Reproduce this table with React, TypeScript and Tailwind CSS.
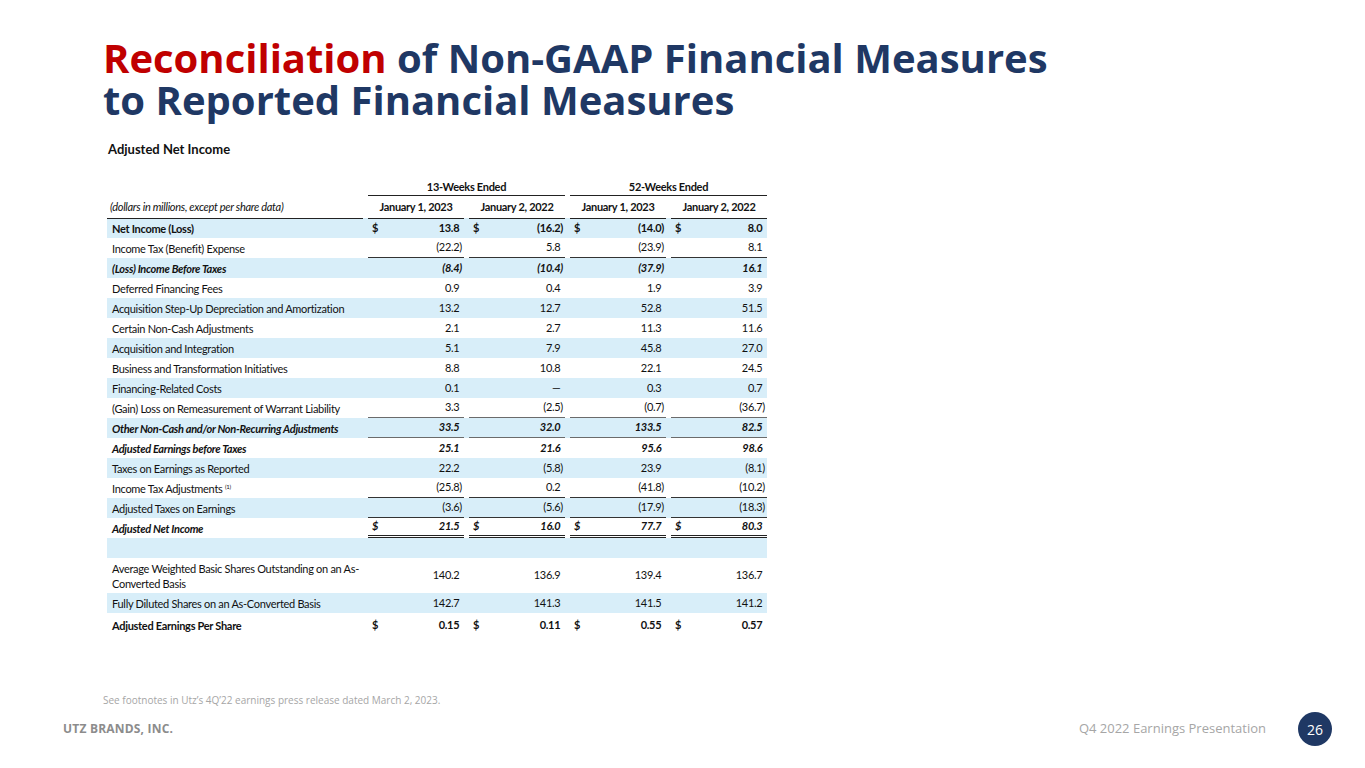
import React from "react";

type Style = "n" | "b" | "bi";
type Row = {
  label: React.ReactNode;
  vals: string[];
  dollar?: boolean;
  style: Style;
  blue?: boolean;
  line?: "single" | "double" | "gray";
  h?: string;
};

const rows: Row[] = [
  { label: "Net Income (Loss)", vals: ["13.8", "(16.2)", "(14.0)", "8.0"], dollar: true, style: "b", blue: true },
  { label: "Income Tax (Benefit) Expense", vals: ["(22.2)", "5.8", "(23.9)", "8.1"], style: "n", line: "single" },
  { label: "(Loss) Income Before Taxes", vals: ["(8.4)", "(10.4)", "(37.9)", "16.1"], style: "bi", blue: true },
  { label: "Deferred Financing Fees", vals: ["0.9", "0.4", "1.9", "3.9"], style: "n" },
  { label: "Acquisition Step-Up Depreciation and Amortization", vals: ["13.2", "12.7", "52.8", "51.5"], style: "n", blue: true },
  { label: "Certain Non-Cash Adjustments", vals: ["2.1", "2.7", "11.3", "11.6"], style: "n" },
  { label: "Acquisition and Integration", vals: ["5.1", "7.9", "45.8", "27.0"], style: "n", blue: true },
  { label: "Business and Transformation Initiatives", vals: ["8.8", "10.8", "22.1", "24.5"], style: "n" },
  { label: "Financing-Related Costs", vals: ["0.1", "—", "0.3", "0.7"], style: "n", blue: true },
  { label: "(Gain) Loss on Remeasurement of Warrant Liability", vals: ["3.3", "(2.5)", "(0.7)", "(36.7)"], style: "n", line: "gray" },
  { label: "Other Non-Cash and/or Non-Recurring Adjustments", vals: ["33.5", "32.0", "133.5", "82.5"], style: "bi", blue: true, line: "gray" },
  { label: "Adjusted Earnings before Taxes", vals: ["25.1", "21.6", "95.6", "98.6"], style: "bi" },
  { label: "Taxes on Earnings as Reported", vals: ["22.2", "(5.8)", "23.9", "(8.1)"], style: "n", blue: true },
  {
    label: (
      <>
        Income Tax Adjustments&nbsp;<sup className="text-[6px] relative -top-[1px]">(1)</sup>
      </>
    ),
    vals: ["(25.8)", "0.2", "(41.8)", "(10.2)"],
    style: "n",
    line: "single",
  },
  { label: "Adjusted Taxes on Earnings", vals: ["(3.6)", "(5.6)", "(17.9)", "(18.3)"], style: "n", blue: true, line: "single" },
  { label: "Adjusted Net Income", vals: ["21.5", "16.0", "77.7", "80.3"], dollar: true, style: "bi", line: "double" },
  { label: "", vals: ["", "", "", ""], style: "n", blue: true },
  {
    label: (
      <>
        Average Weighted Basic Shares Outstanding on an As-
        <br />
        Converted Basis
      </>
    ),
    vals: ["140.2", "136.9", "139.4", "136.7"],
    style: "n",
    h: "h-[35px]",
  },
  { label: "Fully Diluted Shares on an As-Converted Basis", vals: ["142.7", "141.3", "141.5", "141.2"], style: "n", blue: true },
  { label: "Adjusted Earnings Per Share", vals: ["0.15", "0.11", "0.55", "0.57"], dollar: true, style: "b", h: "h-[24px]" },
];

function styleCls(s: Style) {
  if (s === "b") return "font-bold";
  if (s === "bi") return "font-bold italic";
  return "font-normal";
}

function lineCls(l?: Row["line"]) {
  if (l === "single") return "border-b border-[#333]";
  if (l === "gray") return "border-b-[1.5px] border-[#6b6b6b]";
  if (l === "double") return "border-b-[3px] border-double border-[#222]";
  return "";
}

function Num({ v }: { v: string }) {
  const neg = v.startsWith("(");
  return (
    <span>
      {v}
      {!neg && v !== "" && <span className="invisible">)</span>}
    </span>
  );
}

export default function App() {
  return (
    <div className="w-[1365px] h-[768px] bg-white flex flex-col overflow-hidden" style={{ fontFamily: "'Open Sans', sans-serif" }}>
      {/* Title */}
      <div className="pl-[103px] pt-[37px] text-[40px] leading-[42px] font-bold text-[#1f3864]">
        <div>
          <span className="text-[#c00000]">Reconciliation</span> of Non-GAAP Financial Measures
        </div>
        <div>to Reported Financial Measures</div>
      </div>

      {/* Table */}
      <div className="pl-[107px] mt-[20px] text-[#111]" style={{ fontFamily: "Lato, 'Liberation Sans', sans-serif" }}>
        <div className="text-[13px] font-bold leading-[16px] pl-[1px]">Adjusted Net Income</div>

        <div className="mt-[22px] w-[660px] text-[11px] tracking-[-0.3px]">
          {/* period header */}
          <div className="grid grid-cols-[256px_197px_197px] gap-x-[5px] h-[17px] items-end">
            <div />
            <div className="text-center font-bold border-b border-[#222] h-full leading-[15px]">13-Weeks Ended</div>
            <div className="text-center font-bold border-b border-[#222] h-full leading-[15px]">52-Weeks Ended</div>
          </div>
          {/* date header */}
          <div className="grid grid-cols-[256px_96px_96px_96px_96px] gap-x-[5px] h-[22px]">
            <div className="border-b border-[#222] italic pl-[3px] leading-[22px]">(dollars in millions, except per share data)</div>
            {["January 1, 2023", "January 2, 2022", "January 1, 2023", "January 2, 2022"].map((d, i) => (
              <div key={i} className="border-b border-[#222] font-bold text-center leading-[22px]">
                {d}
              </div>
            ))}
          </div>

          {rows.map((r, i) => (
            <div
              key={i}
              className={`grid grid-cols-[256px_96px_96px_96px_96px] gap-x-[5px] ${r.h ?? "h-[20px]"} ${r.blue ? "bg-[#d8eef9]" : ""}`}
            >
              <div className={`flex items-center pl-[5px] leading-[15px] whitespace-nowrap ${styleCls(r.style)}`}>{r.label}</div>
              {r.vals.map((v, j) => (
                <div key={j} className={`flex items-center justify-between pl-[4px] pr-[2px] ${styleCls(r.style)} ${lineCls(r.line)}`}>
                  <span>{r.dollar ? "$" : ""}</span>
                  <Num v={v} />
                </div>
              ))}
            </div>
          ))}
        </div>
      </div>

      <div className="flex-1" />

      {/* Footnote */}
      <div className="pl-[103px] text-[10px] leading-[14px] text-[#a6a6a6]">
        See footnotes in Utz’s 4Q’22 earnings press release dated March 2, 2023.
      </div>

      {/* Footer */}
      <div className="flex items-center justify-between pl-[63px] pr-[33px] pb-[22px] mt-[5px]">
        <div className="text-[12px] font-bold text-[#8c8c8c] tracking-[0.2px]">UTZ BRANDS, INC.</div>
        <div className="flex items-center gap-[32px]">
          <div className="text-[13px] text-[#a6a6a6]">Q4 2022 Earnings Presentation</div>
          <div className="w-[34px] h-[34px] rounded-full bg-[#1f3864] text-white text-[14px] flex items-center justify-center">26</div>
        </div>
      </div>
    </div>
  );
}
